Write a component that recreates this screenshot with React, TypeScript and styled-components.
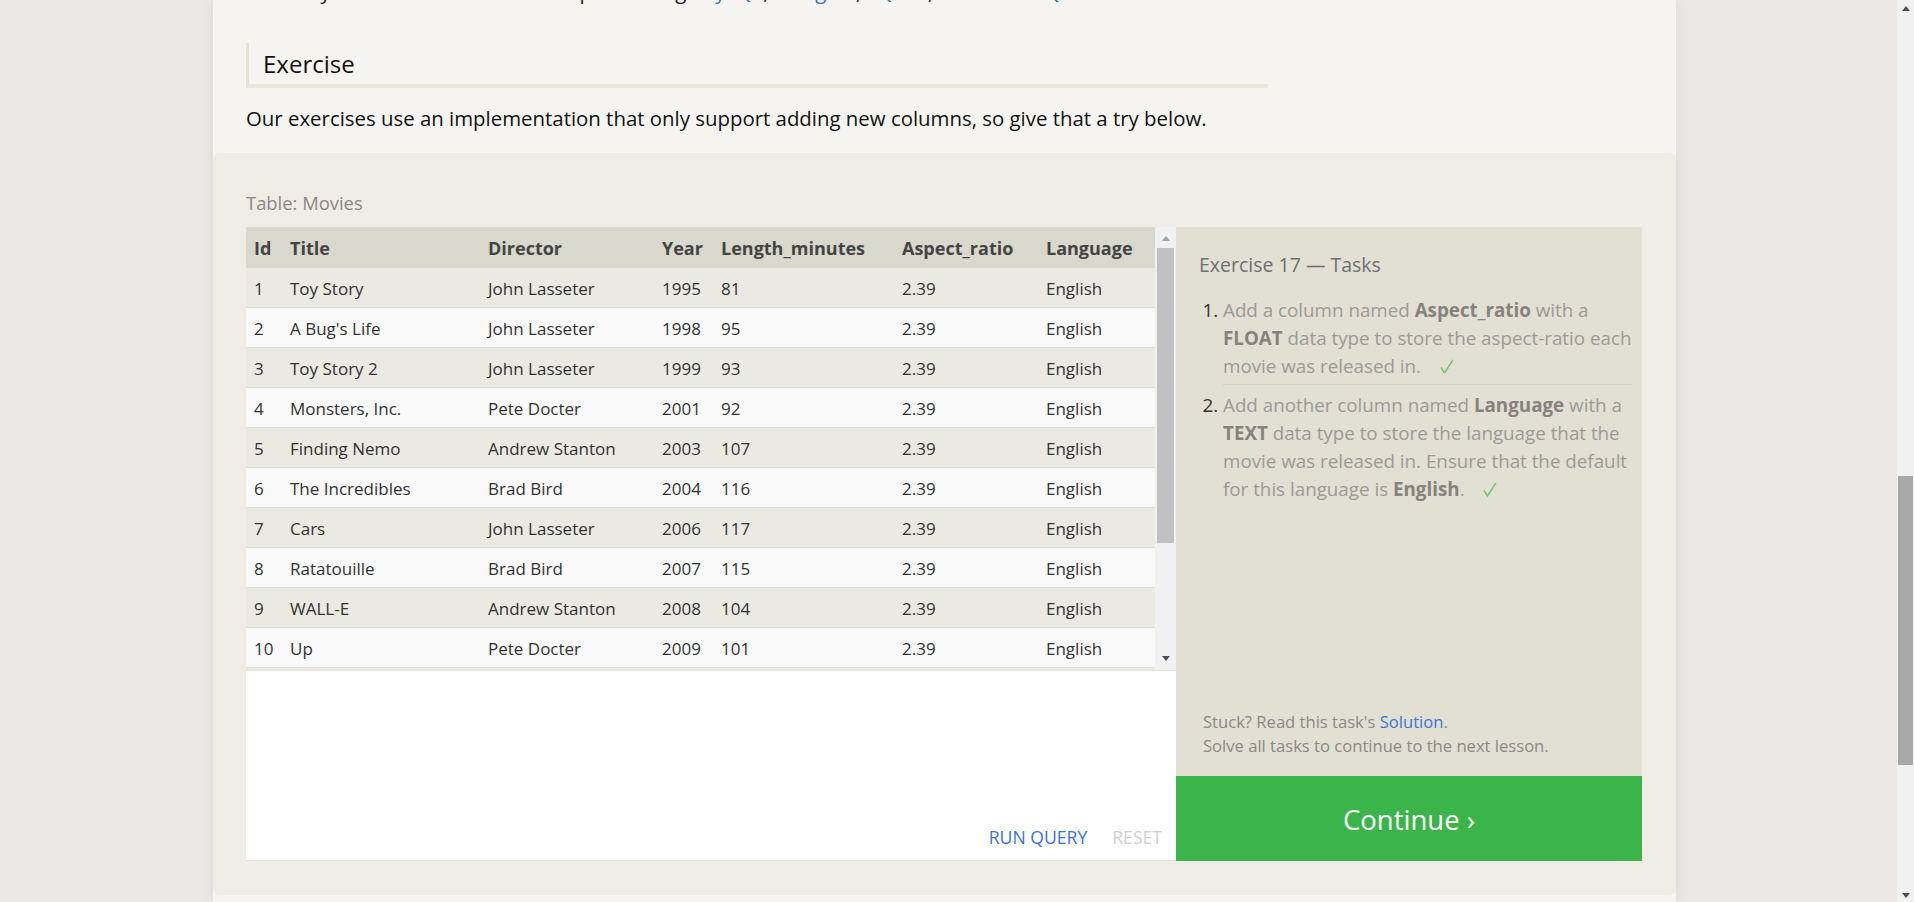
import React from "react";
import styled, { createGlobalStyle } from "styled-components";

const GlobalStyle = createGlobalStyle`
  html, body {
    margin: 0;
    padding: 0;
    height: 100%;
    overflow: hidden;
  }
  body {
    background: #ece8e5;
    font-family: "Open Sans", "Noto Sans", "DejaVu Sans", sans-serif;
    color: #1c1c1c;
  }
`;

type Movie = {
  id: number;
  title: string;
  director: string;
  year: number;
  length: number;
};

const movies: Movie[] = [
  { id: 1, title: "Toy Story", director: "John Lasseter", year: 1995, length: 81 },
  { id: 2, title: "A Bug's Life", director: "John Lasseter", year: 1998, length: 95 },
  { id: 3, title: "Toy Story 2", director: "John Lasseter", year: 1999, length: 93 },
  { id: 4, title: "Monsters, Inc.", director: "Pete Docter", year: 2001, length: 92 },
  { id: 5, title: "Finding Nemo", director: "Andrew Stanton", year: 2003, length: 107 },
  { id: 6, title: "The Incredibles", director: "Brad Bird", year: 2004, length: 116 },
  { id: 7, title: "Cars", director: "John Lasseter", year: 2006, length: 117 },
  { id: 8, title: "Ratatouille", director: "Brad Bird", year: 2007, length: 115 },
  { id: 9, title: "WALL-E", director: "Andrew Stanton", year: 2008, length: 104 },
  { id: 10, title: "Up", director: "Pete Docter", year: 2009, length: 101 },
  { id: 11, title: "Toy Story 3", director: "Lee Unkrich", year: 2010, length: 103 },
  { id: 12, title: "Cars 2", director: "John Lasseter", year: 2011, length: 120 },
];

const columns = [
  { title: "Id", width: 36 },
  { title: "Title", width: 198 },
  { title: "Director", width: 174 },
  { title: "Year", width: 59 },
  { title: "Length_minutes", width: 181 },
  { title: "Aspect_ratio", width: 144 },
  { title: "Language", width: 117 },
];

const Viewport = styled.div`
  display: flex;
  height: 902px;
  overflow: hidden;
`;

const PageArea = styled.div`
  flex: 1;
  padding-left: 213px;
`;

const Panel = styled.main`
  width: 1463px;
  height: 902px;
  background: #f5f4f0;
  box-shadow: 0 0 12px rgba(0, 0, 0, 0.08);
  display: flex;
  flex-direction: column;
`;

const Intro = styled.section`
  display: flow-root;
  padding: 0 33px 21px;
`;

const CutLine = styled.p`
  margin: -23px 0 0;
  font-size: 20.4px;
  line-height: 28px;
  white-space: nowrap;
`;

const DocLink = styled.a`
  color: #3a6fd8;
  text-decoration: none;
`;

const ExerciseHeading = styled.h2`
  margin: 38px 0 0;
  width: 1022px;
  height: 45px;
  box-sizing: border-box;
  border-left: 3px solid #e4e2d5;
  border-bottom: 4px solid #e8e6da;
  padding-left: 14px;
  font-size: 24px;
  line-height: 41px;
  font-weight: 400;
  color: #111;
`;

const IntroText = styled.p`
  margin: 16px 0 0;
  font-size: 20.4px;
  line-height: 28px;
  color: #111;
`;

const Workbench = styled.section`
  background: #efede6;
  border-radius: 6px;
  padding: 38px 34px 34px 33px;
`;

const TableLabel = styled.div`
  font-size: 18.4px;
  line-height: 24px;
  color: #8a8884;
  margin-bottom: 12px;
`;

const Workspace = styled.div`
  display: flex;
  height: 634px;
`;

const TablePane = styled.div`
  width: 930px;
  box-sizing: border-box;
  background: #fff;
  border-bottom: 1px solid #e4e2d8;
  display: flex;
  flex-direction: column;
`;

const TableScroll = styled.div`
  display: flex;
  height: 443px;
  border-bottom: 1px solid #e2e1da;
`;

const TableClip = styled.div`
  width: 909px;
  overflow: hidden;
`;

const Table = styled.table`
  width: 909px;
  table-layout: fixed;
  border-collapse: separate;
  border-spacing: 0;
`;

const Th = styled.th`
  padding: 1px 8px 0;
  text-align: left;
  font-size: 18px;
  line-height: 40px;
  font-weight: 700;
  color: #444;
  background: #d9d8cc;
  white-space: nowrap;
`;

const Tr = styled.tr<{ $odd: boolean }>`
  background: ${(p) => (p.$odd ? "#eae9e2" : "#f9f9f9")};
`;

const Td = styled.td`
  padding: 2px 8px 0;
  font-size: 17px;
  line-height: 37px;
  color: #333;
  border-bottom: 1px solid #dddcd5;
  white-space: nowrap;
`;

const ScrollTrack = styled.div<{ $w: number }>`
  width: ${(p) => p.$w}px;
  background: #f1f1f1;
  display: flex;
  flex-direction: column;
  align-items: center;
`;

const ScrollArrow = styled.div<{ $dir: "up" | "down"; $color: string }>`
  width: 0;
  height: 0;
  border-left: 4.5px solid transparent;
  border-right: 4.5px solid transparent;
  ${(p) =>
    p.$dir === "up"
      ? `border-bottom: 5px solid ${p.$color};`
      : `border-top: 5px solid ${p.$color};`}
`;

const ScrollThumb = styled.div<{ $w: number; $color: string }>`
  width: ${(p) => p.$w}px;
  background: ${(p) => p.$color};
`;

const Spacer = styled.div<{ $size?: number }>`
  flex: ${(p) => (p.$size ? `0 0 ${p.$size}px` : "1")};
`;

const QueryArea = styled.div`
  flex: 1;
  display: flex;
  justify-content: flex-end;
  align-items: flex-end;
  gap: 25px;
  padding: 0 14px 11px;
`;

const QueryButton = styled.span<{ $active?: boolean }>`
  font-size: 17.6px;
  line-height: 24px;
  text-transform: uppercase;
  color: ${(p) => (p.$active ? "#3a72e0" : "#cfcfcf")};
  cursor: ${(p) => (p.$active ? "pointer" : "default")};
`;

const TasksColumn = styled.aside`
  width: 466px;
  display: flex;
  flex-direction: column;
`;

const TasksPanel = styled.div`
  flex: 1;
  background: #e2dfd3;
  padding: 25px 10px 19px 23px;
  display: flex;
  flex-direction: column;
`;

const TasksTitle = styled.div`
  font-size: 19.5px;
  line-height: 26px;
  color: #6e7075;
`;

const TaskList = styled.ol`
  margin: 18px 0 0;
  padding-left: 24px;
`;

const TaskItem = styled.li`
  font-size: 18.8px;
  line-height: 28px;
  color: #9d9a93;
  padding-bottom: 4px;
  white-space: nowrap;
  &::marker {
    color: #333;
  }
  & + & {
    border-top: 1px solid #d3d1c5;
    padding-top: 6px;
  }
  b {
    color: #86837c;
    font-weight: 700;
  }
`;

const CheckMark = styled.svg`
  width: 14px;
  height: 15px;
  margin-left: 14px;
  vertical-align: -1px;
`;

const StuckNote = styled.div`
  margin-top: auto;
  padding-left: 4px;
  font-size: 16.6px;
  line-height: 23.5px;
  color: #8b8984;
`;

const SolutionLink = styled.a`
  color: #3b76dc;
  text-decoration: none;
`;

const ContinueButton = styled.div`
  height: 85px;
  background: #3bb54a;
  color: #fff;
  font-size: 27.5px;
  display: flex;
  align-items: center;
  justify-content: center;
  padding-top: 2px;
  box-sizing: border-box;
  cursor: pointer;
`;

const PageScrollbar = styled(ScrollTrack)`
  padding: 6px 0 4px;
  box-sizing: border-box;
  height: 902px;
`;

const Check = () => (
  <CheckMark viewBox="0 0 14 15">
    <polyline
      points="1,8.5 4.5,14 13,0.8"
      fill="none"
      stroke="#74c074"
      strokeWidth="1.4"
      strokeLinejoin="round"
    />
  </CheckMark>
);

export default function App() {
  return (
    <>
      <GlobalStyle />
      <Viewport>
        <PageArea>
          <Panel>
            <Intro>
              <CutLine>
                consult your database docs before proceeding:{" "}
                <DocLink href="#">MySQL</DocLink>,{" "}
                <DocLink href="#">Postgres</DocLink>,{" "}
                <DocLink href="#">SQLite</DocLink>,{" "}
                <DocLink href="#">Microsoft SQL Server</DocLink>.
              </CutLine>
              <ExerciseHeading>Exercise</ExerciseHeading>
              <IntroText>
                Our exercises use an implementation that only support adding new
                columns, so give that a try below.
              </IntroText>
            </Intro>

            <Workbench>
              <TableLabel>Table: Movies</TableLabel>
              <Workspace>
                <TablePane>
                  <TableScroll>
                    <TableClip>
                      <Table>
                        <colgroup>
                          {columns.map((c) => (
                            <col key={c.title} style={{ width: c.width }} />
                          ))}
                        </colgroup>
                        <thead>
                          <tr>
                            {columns.map((c) => (
                              <Th key={c.title}>{c.title}</Th>
                            ))}
                          </tr>
                        </thead>
                        <tbody>
                          {movies.map((m, i) => (
                            <Tr key={m.id} $odd={i % 2 === 0}>
                              <Td>{m.id}</Td>
                              <Td>{m.title}</Td>
                              <Td>{m.director}</Td>
                              <Td>{m.year}</Td>
                              <Td>{m.length}</Td>
                              <Td>2.39</Td>
                              <Td>English</Td>
                            </Tr>
                          ))}
                        </tbody>
                      </Table>
                    </TableClip>
                    <ScrollTrack $w={21}>
                      <Spacer $size={9} />
                      <ScrollArrow $dir="up" $color="#a3a3a3" />
                      <ScrollThumb $w={17} $color="#c1c1c1" style={{ marginTop: 7, height: 295 }} />
                      <Spacer />
                      <ScrollArrow $dir="down" $color="#505050" />
                      <Spacer $size={9} />
                    </ScrollTrack>
                  </TableScroll>
                  <QueryArea>
                    <QueryButton $active>Run Query</QueryButton>
                    <QueryButton>Reset</QueryButton>
                  </QueryArea>
                </TablePane>

                <TasksColumn>
                  <TasksPanel>
                    <TasksTitle>Exercise 17 — Tasks</TasksTitle>
                    <TaskList>
                      <TaskItem>
                        Add a column named <b>Aspect_ratio</b> with a
                        <br />
                        <b>FLOAT</b> data type to store the aspect-ratio each
                        <br />
                        movie was released in. <Check />
                      </TaskItem>
                      <TaskItem>
                        Add another column named <b>Language</b> with a
                        <br />
                        <b>TEXT</b> data type to store the language that the
                        <br />
                        movie was released in. Ensure that the default
                        <br />
                        for this language is <b>English</b>. <Check />
                      </TaskItem>
                    </TaskList>
                    <StuckNote>
                      Stuck? Read this task's <SolutionLink href="#">Solution</SolutionLink>.
                      <br />
                      Solve all tasks to continue to the next lesson.
                    </StuckNote>
                  </TasksPanel>
                  <ContinueButton>Continue ›</ContinueButton>
                </TasksColumn>
              </Workspace>
            </Workbench>
          </Panel>
        </PageArea>
        <PageScrollbar $w={17}>
          <ScrollArrow $dir="up" $color="#505050" />
          <ScrollThumb $w={15} $color="#a8a8a8" style={{ marginTop: 465, height: 289 }} />
          <Spacer />
          <ScrollArrow $dir="down" $color="#505050" />
        </PageScrollbar>
      </Viewport>
    </>
  );
}
